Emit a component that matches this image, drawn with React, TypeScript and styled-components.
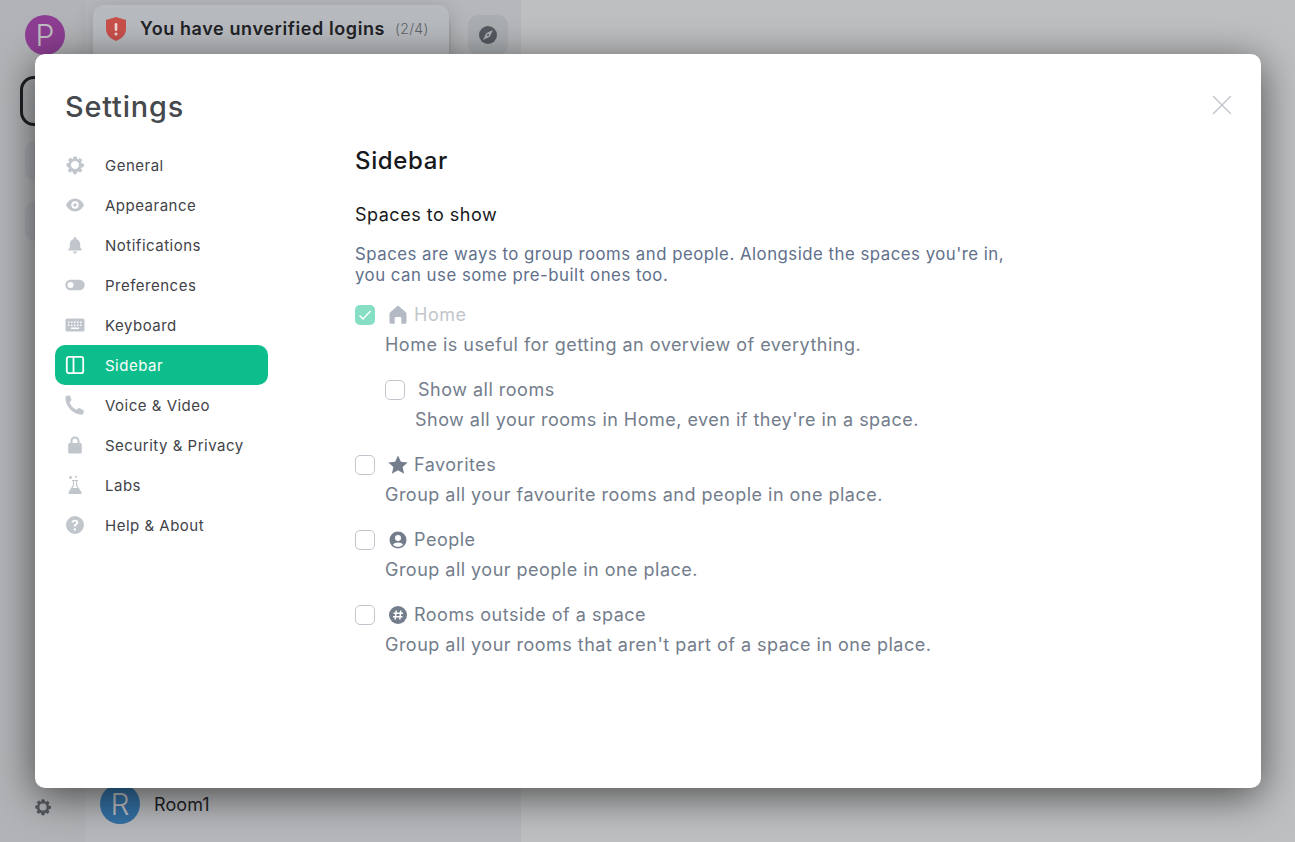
import React from "react";
import styled, { createGlobalStyle } from "styled-components";
import { X } from "lucide-react";

const GlobalStyle = createGlobalStyle`
  html, body {
    margin: 0;
    height: 100%;
    overflow: hidden;
    font-family: Inter, "Noto Sans", sans-serif;
  }
  #root { height: 100%; }
`;

const Page = styled.div`
  position: relative;
  display: flex;
  height: 842px;
  background: #fff;
  overflow: hidden;
`;

const SpacePanel = styled.div`
  width: 85px;
  flex: none;
  display: flex;
  flex-direction: column;
  align-items: center;
  padding: 15px 0 26px 5px;
  box-sizing: border-box;
  background: #eceef1;
  color: #676c74;
`;

const Avatar = styled.div<{ $bg: string }>`
  width: 40px;
  height: 40px;
  border-radius: 50%;
  flex: none;
  background: ${(p) => p.$bg};
  color: #fff;
  font-size: 30px;
  font-weight: 300;
  line-height: 40px;
  text-align: center;
`;

const SpaceActive = styled.div`
  width: 50px;
  height: 50px;
  flex: none;
  margin-top: 21px;
  border: 3px solid #17191c;
  border-radius: 14px;
  box-sizing: border-box;
  background: #e3e5e8;
`;

const SpaceTile = styled.div<{ $gap: number }>`
  width: 40px;
  height: 40px;
  border-radius: 10px;
  background: #e0e2e6;
  margin-top: ${(p) => p.$gap}px;
  flex: none;
`;

const SpaceFooter = styled.div`
  margin-top: auto;
  display: flex;
  margin-right: 5px;
`;

const RoomPanel = styled.div`
  width: 436px;
  flex: none;
  box-sizing: border-box;
  padding: 15px 13px 18px 8px;
  display: flex;
  flex-direction: column;
  background: #f2f3f6;
`;

const RoomHeader = styled.div`
  display: flex;
  gap: 17px;
`;

const SearchBar = styled.div`
  flex: 1;
  height: 40px;
  border-radius: 10px;
  background: #e3e6ea;
`;

const ExploreButton = styled.div`
  width: 40px;
  height: 40px;
  border-radius: 10px;
  background: #e3e6ea;
  display: flex;
  align-items: center;
  justify-content: center;
`;

const RoomRow = styled.div`
  margin-top: auto;
  margin-left: 7px;
  display: flex;
  align-items: center;
  gap: 14px;
  font-size: 18px;
  letter-spacing: 0.1px;
  color: #17191c;
`;

const MainPanel = styled.div`
  flex: 1;
  background: #fff;
`;

const Overlay = styled.div`
  position: absolute;
  inset: 0;
  background: rgba(46, 48, 51, 0.31);
`;

const Toast = styled.div`
  position: absolute;
  left: 93px;
  top: 5px;
  width: 356px;
  height: 70px;
  box-sizing: border-box;
  border-radius: 10px;
  padding: 12px 12px;
  display: flex;
  align-items: flex-start;
  background: #b7babe;
  box-shadow: 0 4px 20px rgba(0, 0, 0, 0.18);
`;

const ToastTitle = styled.span`
  margin-left: 13px;
  font-size: 18px;
  font-weight: 600;
  letter-spacing: 0.6px;
  line-height: 23px;
  color: #1f2226;
`;

const ToastCount = styled.span`
  margin-left: 10px;
  font-size: 14px;
  font-weight: 300;
  letter-spacing: 0.3px;
  line-height: 23px;
  color: #5e6269;
`;

const Modal = styled.div`
  position: absolute;
  left: 35px;
  top: 54px;
  width: 1226px;
  height: 734px;
  box-sizing: border-box;
  background: #fff;
  border-radius: 10px;
  box-shadow: 0 8px 40px rgba(0, 0, 0, 0.6);
  padding: 35px 30px 0 20px;
  display: flex;
  flex-direction: column;
`;

const ModalTitle = styled.h1`
  margin: 0 0 0 10px;
  font-size: 28.8px;
  line-height: 36px;
  font-weight: 550;
  letter-spacing: 0.85px;
  color: #45484d;
`;

const CloseButton = styled.div`
  position: absolute;
  right: 22px;
  top: 34px;
  color: #c1c6cd;
  display: flex;
`;

const Columns = styled.div`
  display: flex;
  margin-top: 20px;
`;

const Nav = styled.nav`
  width: 213px;
  flex: none;
  display: flex;
  flex-direction: column;
`;

const NavItem = styled.div<{ $active?: boolean }>`
  height: 40px;
  display: flex;
  align-items: center;
  gap: 20px;
  padding-left: 10px;
  border-radius: 10px;
  font-size: 15px;
  letter-spacing: 0.5px;
  background: ${(p) => (p.$active ? "#0dbd8b" : "transparent")};
  color: ${(p) => (p.$active ? "#fff" : "#3f4349")};
`;

const NavIcon = styled.svg<{ $active?: boolean }>`
  width: 20px;
  height: 20px;
  flex: none;
  color: ${(p) => (p.$active ? "#fff" : "#c1c6cd")};
`;

const Content = styled.div`
  margin-left: 87px;
  width: 700px;
  padding-top: 1px;
  display: flex;
  flex-direction: column;
`;

const Heading = styled.h2`
  margin: 0;
  font-size: 24px;
  line-height: 30px;
  font-weight: 550;
  letter-spacing: 0.65px;
  color: #17191c;
`;

const SubHeading = styled.h3`
  margin: 26px 0 0;
  font-size: 18px;
  line-height: 26px;
  font-weight: 400;
  letter-spacing: 0.5px;
  color: #17191c;
`;

const Caption = styled.p`
  margin: 16px 0 0;
  font-size: 16.8px;
  line-height: 21px;
  letter-spacing: 0.5px;
  color: #61708b;
`;

const OptionRow = styled.div<{ $nested?: boolean; $gap?: number }>`
  margin-top: ${(p) => p.$gap ?? 24}px;
  margin-left: ${(p) => (p.$nested ? 30 : 0)}px;
  display: flex;
  flex-direction: column;
`;

const OptionHead = styled.div`
  display: flex;
  align-items: center;
  height: 20px;
`;

const Check = styled.span<{ $on?: boolean }>`
  width: 20px;
  height: 20px;
  flex: none;
  box-sizing: border-box;
  border-radius: 5px;
  display: flex;
  align-items: center;
  justify-content: center;
  border: ${(p) => (p.$on ? "none" : "1.5px solid #c1c6cd")};
  background: ${(p) => (p.$on ? "#86dfc5" : "#fff")};
`;

const OptionIcon = styled.svg<{ $muted?: boolean }>`
  width: 20px;
  height: 20px;
  flex: none;
  margin-left: 13px;
  color: ${(p) => (p.$muted ? "#b4bac3" : "#737d8c")};
`;

const OptionLabel = styled.span<{ $muted?: boolean; $plain?: boolean }>`
  margin-left: ${(p) => (p.$plain ? 13 : 6)}px;
  font-size: 18px;
  line-height: 20px;
  letter-spacing: 0.5px;
  color: ${(p) => (p.$muted ? "#c1c6cd" : "#737d8c")};
`;

const OptionHint = styled.div`
  margin: 9px 0 0 30px;
  font-size: 18px;
  line-height: 22px;
  letter-spacing: 0.48px;
  color: #737d8c;
`;

const gearPath =
  "M8.800 2h2.400l.4 2.200 1.600.7 1.900-1.300 1.700 1.700-1.300 1.900.7 1.600 2.200.4v2.400l-2.200.4-.7 1.600 1.300 1.900-1.700 1.700-1.900-1.300-1.600.7-.4 2.200H8.800l-.4-2.200-1.600-.7-1.900 1.300-1.700-1.700 1.300-1.900-.7-1.600L2 11.200V8.800l2.200-.4.7-1.600-1.300-1.900 1.700-1.700 1.900 1.300 1.600-.7zM10 5.500a4.500 4.500 0 1 0 0 9 4.500 4.500 0 0 0 0-9z";

const Gear = () => (
  <path
    fill="currentColor"
    fillRule="evenodd"
    stroke="currentColor"
    strokeWidth="1"
    strokeLinejoin="round"
    d={gearPath}
  />
);

const navItems: { label: string; active?: boolean; icon: React.ReactNode }[] = [
  { label: "General", icon: <Gear /> },
  {
    label: "Appearance",
    icon: (
      <path
        fill="currentColor"
        fillRule="evenodd"
        d="M10 3.500c4.600 0 8 3.900 9 6.500-1 2.600-4.400 6.500-9 6.500s-8-3.900-9-6.500c1-2.600 4.400-6.500 9-6.500zm0 2.800a3.700 3.700 0 1 0 0 7.400 3.700 3.700 0 0 0 0-7.400zm0 1.900a1.800 1.800 0 1 1 0 3.600 1.800 1.800 0 0 1 0-3.600z"
      />
    ),
  },
  {
    label: "Notifications",
    icon: (
      <path
        fill="currentColor"
        d="M10 2a1.300 1.300 0 0 1 1.300 1.300v.6c2.500.6 3.900 2.700 3.900 5.100v3.600l1.500 1.900c.3.400 0 .9-.5.900H3.800c-.5 0-.8-.5-.5-.9l1.500-1.900V9c0-2.400 1.400-4.500 3.900-5.100v-.6A1.300 1.300 0 0 1 10 2zM8 16.500h4a2 2 0 0 1-4 0z"
      />
    ),
  },
  {
    label: "Preferences",
    icon: (
      <path
        fill="currentColor"
        fillRule="evenodd"
        d="M5.500 4.800h9a5.200 5.200 0 0 1 0 10.400h-9a5.200 5.200 0 0 1 0-10.400zm0 2.200a3 3 0 1 0 0 6 3 3 0 0 0 0-6z"
      />
    ),
  },
  {
    label: "Keyboard",
    icon: (
      <path
        fill="currentColor"
        fillRule="evenodd"
        d="M2 3.500h16A1.500 1.500 0 0 1 19.500 5v10a1.500 1.500 0 0 1-1.500 1.500H2A1.500 1.500 0 0 1 .5 15V5A1.500 1.500 0 0 1 2 3.500zm1 3V8h1.500V6.500zm3 0V8h1.500V6.500zm3 0V8h1.500V6.500zm3 0V8h1.500V6.500zm3 0V8h1.500V6.500zm-12 3V11h1.500V9.500zm3 0V11h1.500V9.500zm3 0V11h1.500V9.500zm3 0V11h1.500V9.500zm3 0V11h1.500V9.500zM6 12.500V14h8v-1.500z"
      />
    ),
  },
  {
    label: "Sidebar",
    active: true,
    icon: (
      <>
        <rect x="1.800" y="1.800" width="16.400" height="16.400" rx="2" fill="none" stroke="currentColor" strokeWidth="1.800" />
        <path d="M8.500 2v16" fill="none" stroke="currentColor" strokeWidth="1.800" />
      </>
    ),
  },
  {
    label: "Voice & Video",
    icon: (
      <path
        fill="currentColor"
        d="M1.800 .8L4.200.5c.5 0 .9.200 1.100.700l1.100 3.400c.1.400 0 .8-.3 1.100L4.600 7.200c.8 3 3.800 6.300 7.200 7.600l1.500-1.500c.3-.3.800-.3 1.200-.1l3.800 1.900c.4.200.6.700.5 1.100l-.5 2.400c-.2.700-.8 1.200-1.500 1.100C8 19.400.3 11.500.4 2.500c0-.8.500-1.500 1.400-1.700z"
      />
    ),
  },
  {
    label: "Security & Privacy",
    icon: (
      <path
        fill="currentColor"
        fillRule="evenodd"
        d="M10 1.500a4.500 4.500 0 0 1 4.500 4.500v2h.7c.9 0 1.600.7 1.600 1.600v7.300c0 .9-.7 1.600-1.600 1.600H4.800c-.9 0-1.600-.7-1.600-1.600V9.600C3.200 8.700 3.900 8 4.800 8h.7V6A4.500 4.500 0 0 1 10 1.500zm0 2A2.500 2.500 0 0 0 7.500 6v2h5V6A2.500 2.500 0 0 0 10 3.500z"
      />
    ),
  },
  {
    label: "Labs",
    icon: (
      <>
        <circle cx="5.500" cy="2.500" r="1.400" fill="currentColor" />
        <circle cx="11" cy="1.800" r="1" fill="currentColor" />
        <path
          fill="currentColor"
          fillRule="evenodd"
          d="M7 5h6v1h-.9v4.300l4.400 7c.4.700 0 1.700-.9 1.700H4.400c-.9 0-1.300-1-.9-1.700l4.400-7V6H7zm2 1v4.700L7.400 13h5.200L11 10.700V6z"
        />
      </>
    ),
  },
  {
    label: "Help & About",
    icon: (
      <path
        fill="currentColor"
        fillRule="evenodd"
        d="M10 1a9 9 0 1 1 0 18 9 9 0 0 1 0-18zm-.1 3.800c-1.900 0-3.200 1-3.400 2.800h2c.1-.7.600-1.100 1.300-1.100.8 0 1.300.4 1.300 1 0 .5-.3.900-1 1.300-1 .6-1.300 1.200-1.200 2.400v.4h1.900v-.3c0-.6.200-.9 1-1.400.9-.6 1.500-1.300 1.500-2.400 0-1.600-1.300-2.700-3.400-2.700zm-.1 8.400a1.200 1.200 0 1 0 0 2.400 1.200 1.200 0 0 0 0-2.400z"
      />
    ),
  },
];

export default function App() {
  return (
    <>
      <GlobalStyle />
      <Page>
        <SpacePanel>
          <Avatar $bg="#b945be">P</Avatar>
          <SpaceActive />
          <SpaceTile $gap={15} />
          <SpaceTile $gap={20} />
          <SpaceFooter>
            <svg viewBox="0 0 20 20" width="18" height="18">
              <Gear />
            </svg>
          </SpaceFooter>
        </SpacePanel>
        <RoomPanel>
          <RoomHeader>
            <SearchBar />
            <ExploreButton>
              <svg width="18" height="18" viewBox="0 0 18 18">
                <circle cx="9" cy="9" r="9" fill="#676c74" />
                <path fill="#e3e6ea" d="M14 4L10.800 10.800 4 14 7.200 7.200z" />
                <circle cx="9" cy="9" r="1" fill="#676c74" />
              </svg>
            </ExploreButton>
          </RoomHeader>
          <RoomRow>
            <Avatar $bg="#368bd6">R</Avatar>
            Room1
          </RoomRow>
        </RoomPanel>
        <MainPanel />
        <Overlay />

        <Toast>
          <svg width="22" height="24" viewBox="0 0 22 24">
            <path
              fill="#c9504b"
              d="M11 0l10 3v9c0 6-4.500 9.800-10 12C5.500 21.800 1 18 1 12V3z"
            />
            <rect x="9.700" y="6" width="2.600" height="8" rx="1.300" fill="#f1d9d7" />
            <circle cx="11" cy="17" r="1.500" fill="#f1d9d7" />
          </svg>
          <ToastTitle>You have unverified logins</ToastTitle>
          <ToastCount>(2/4)</ToastCount>
        </Toast>

        <Modal>
          <ModalTitle>Settings</ModalTitle>
          <CloseButton>
            <X size={34} strokeWidth={1} />
          </CloseButton>
          <Columns>
            <Nav>
              {navItems.map((item) => (
                <NavItem key={item.label} $active={item.active}>
                  <NavIcon viewBox="0 0 20 20" $active={item.active}>
                    {item.icon}
                  </NavIcon>
                  {item.label}
                </NavItem>
              ))}
            </Nav>
            <Content>
              <Heading>Sidebar</Heading>
              <SubHeading>Spaces to show</SubHeading>
              <Caption>
                Spaces are ways to group rooms and people. Alongside the spaces you're in,
                <br />
                you can use some pre-built ones too.
              </Caption>

              <OptionRow $gap={19}>
                <OptionHead>
                  <Check $on>
                    <svg width="16" height="16" viewBox="0 0 16 16">
                      <path d="M2.500 8.500l3.500 3.500 7.500-8" fill="none" stroke="#fff" strokeWidth="1.500" />
                    </svg>
                  </Check>
                  <OptionIcon viewBox="0 0 20 20" $muted>
                    <path
                      fill="currentColor"
                      d="M8.800 1.500c.7-.6 1.700-.6 2.400 0l6.300 5.500c.6.500 1 1.300 1 2.100V17c0 1-.8 1.800-1.800 1.800h-3.400V13a1 1 0 0 0-1-1H7.700a1 1 0 0 0-1 1v5.800H3.300c-1 0-1.800-.8-1.800-1.800V9.100c0-.8.400-1.600 1-2.100z"
                    />
                  </OptionIcon>
                  <OptionLabel $muted>Home</OptionLabel>
                </OptionHead>
                <OptionHint>Home is useful for getting an overview of everything.</OptionHint>
              </OptionRow>

              <OptionRow $nested>
                <OptionHead>
                  <Check />
                  <OptionLabel $plain>Show all rooms</OptionLabel>
                </OptionHead>
                <OptionHint>Show all your rooms in Home, even if they're in a space.</OptionHint>
              </OptionRow>

              <OptionRow>
                <OptionHead>
                  <Check />
                  <OptionIcon viewBox="0 0 20 20">
                    <path
                      fill="currentColor"
                      d="M10 .5l2.900 6.300 6.800.7-5.100 4.500 1.500 6.800L10 15.300l-6.100 3.500 1.500-6.800L.3 7.500l6.800-.7z"
                    />
                  </OptionIcon>
                  <OptionLabel>Favorites</OptionLabel>
                </OptionHead>
                <OptionHint>Group all your favourite rooms and people in one place.</OptionHint>
              </OptionRow>

              <OptionRow>
                <OptionHead>
                  <Check />
                  <OptionIcon viewBox="0 0 20 20">
                    <path
                      fill="currentColor"
                      fillRule="evenodd"
                      d="M10 1.500a8.500 8.500 0 1 1 0 17 8.500 8.500 0 0 1 0-17zm0 3.500a3 3 0 1 0 0 6 3 3 0 0 0 0-6zm-5 9.500c1 1.500 3 2.300 5 2.300s4-.8 5-2.300c-.8-1.200-2.700-2-5-2s-4.200.8-5 2z"
                    />
                  </OptionIcon>
                  <OptionLabel>People</OptionLabel>
                </OptionHead>
                <OptionHint>Group all your people in one place.</OptionHint>
              </OptionRow>

              <OptionRow>
                <OptionHead>
                  <Check />
                  <OptionIcon viewBox="0 0 20 20">
                    <circle cx="10" cy="10" r="9" fill="currentColor" />
                    <path
                      d="M8.200 5.500L7.200 14.500M12.800 5.500l-1 9M5.500 8.300h9.500M5 11.700h9.500"
                      fill="none"
                      stroke="#fff"
                      strokeWidth="1.500"
                    />
                  </OptionIcon>
                  <OptionLabel>Rooms outside of a space</OptionLabel>
                </OptionHead>
                <OptionHint>Group all your rooms that aren't part of a space in one place.</OptionHint>
              </OptionRow>
            </Content>
          </Columns>
        </Modal>
      </Page>
    </>
  );
}
